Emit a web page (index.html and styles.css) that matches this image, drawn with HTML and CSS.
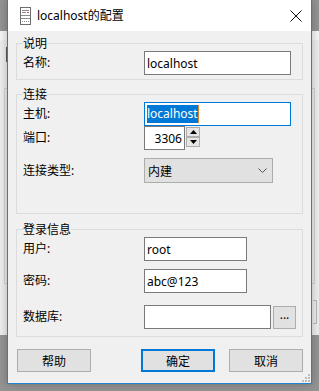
FILE: index.html
```html
<!DOCTYPE html>
<html lang="zh-CN">
<head>
  <meta charset="UTF-8">
  <meta name="viewport" content="width=device-width, initial-scale=1.0">
  <title>localhost的配置</title>
  <link rel="stylesheet" href="styles.css">
</head>
<body>
  <!-- Window behind the dialog -->
  <div class="back-window">
    <div class="back-mark"></div>
    <div class="back-frame"></div>
    <div class="back-box"></div>
  </div>

  <!-- Connection dialog -->
  <div class="dialog">
    <div class="titlebar">
      <svg class="app-icon" width="11" height="18" viewBox="0 0 11 18">
        <rect x="0.5" y="0.5" width="10" height="17" fill="#fff" stroke="#6e6e6e"/>
        <path d="M2 3.5h7M2 5.5h4M1 8.5h9M1 11.5h9" stroke="#8c8c8c"/>
        <path d="M7 5.5h2" stroke="#d05050"/>
        <path d="M2 14.5h1M4 14.5h1M6 14.5h1M8 14.5h1" stroke="#8c8c8c"/>
      </svg>
      <span class="title">localhost的配置</span>
      <svg class="close" width="12" height="12" viewBox="0 0 12 12">
        <path d="M0.5 0.5l11 11M11.5 0.5l-11 11" stroke="#111" stroke-width="1"/>
      </svg>
    </div>

    <div class="content">
      <fieldset class="group group-desc">
        <legend>说明</legend>
        <div class="row">
          <label>名称:</label>
          <div class="field field-wide">localhost</div>
        </div>
      </fieldset>

      <fieldset class="group group-conn">
        <legend>连接</legend>
        <div class="row">
          <label>主机:</label>
          <div class="field field-wide field-focus"><span class="selected">localhost</span><span class="caret"></span></div>
        </div>
        <div class="row row-port">
          <label>端口:</label>
          <div class="field field-port">3306</div>
          <div class="spinner">
            <div class="spin-btn"><svg width="7" height="4" viewBox="0 0 7 4"><path d="M3.5 0L7 4H0z" fill="#000"/></svg></div>
            <div class="spin-btn"><svg width="7" height="4" viewBox="0 0 7 4"><path d="M0 0h7L3.5 4z" fill="#000"/></svg></div>
          </div>
        </div>
        <div class="row row-type">
          <label>连接类型:</label>
          <div class="combo">
            <span>内建</span>
            <svg width="9" height="5" viewBox="0 0 9 5"><path d="M0.5 0.5l4 4 4-4" fill="none" stroke="#555"/></svg>
          </div>
        </div>
      </fieldset>

      <fieldset class="group group-login">
        <legend>登录信息</legend>
        <div class="row">
          <label>用户:</label>
          <div class="field field-short">root</div>
        </div>
        <div class="row row-pass">
          <label>密码:</label>
          <div class="field field-short">abc@123</div>
        </div>
        <div class="row row-db">
          <label>数据库:</label>
          <div class="field field-db"></div>
          <button class="browse">...</button>
        </div>
      </fieldset>

      <div class="actions">
        <button class="btn btn-help">帮助</button>
        <button class="btn btn-ok">确定</button>
        <button class="btn btn-cancel">取消</button>
      </div>
    </div>

    <svg class="grip" width="8" height="8" viewBox="0 0 8 8">
      <path d="M6 0h2v2H6zM3 3h2v2H3zM6 3h2v2H6zM0 6h2v2H0zM3 6h2v2H3zM6 6h2v2H6z" fill="#bdbdbd"/>
    </svg>
  </div>
</body>
</html>
```

FILE: styles.css
```css
* {
  margin: 0;
  padding: 0;
  box-sizing: border-box;
}

body {
  width: 319px;
  height: 391px;
  overflow: hidden;
  position: relative;
  background: #939393;
  font-family: "Noto Sans", "Noto Sans CJK SC", sans-serif;
  font-size: 12px;
  color: #000;
}

/* Window behind */
.back-window {
  position: absolute;
  left: 0;
  top: 31px;
  width: 319px;
  height: 304px;
  background: #ececec;
  border-top: 9px solid #f4f4f4;
}

.back-mark {
  position: absolute;
  left: 6px;
  top: 7px;
  width: 2px;
  height: 15px;
  background: #5c5c5c;
}

.back-frame {
  position: absolute;
  left: 4px;
  right: 4px;
  top: 48px;
  height: 196px;
  border: 1px solid #d2d2d2;
}

.back-box {
  position: absolute;
  right: 2px;
  top: 260px;
  width: 4px;
  height: 24px;
  border: 1px solid #b8b8b8;
  border-left: none;
}

/* Dialog */
.dialog {
  position: absolute;
  left: 7px;
  top: -1px;
  width: 305px;
  height: 385px;
  border: 1px solid #1f82d5;
  background: #f0f0f0;
  box-shadow: 0 0 8px rgba(0, 0, 0, 0.25);
}

.titlebar {
  height: 31px;
  background: #fff;
  display: flex;
  align-items: center;
  padding-left: 12px;
}

.app-icon {
  display: block;
  margin-top: 1px;
}

.title {
  margin-left: 6px;
  line-height: 16px;
}

.close {
  display: block;
  margin-left: auto;
  margin-right: 9px;
  margin-top: 1px;
}

.content {
  padding: 5px 8px 0 8px;
}

/* Group boxes */
.group {
  border: 1px solid #dcdcdc;
  padding: 0 6px 0 6px;
  min-width: 0;
}

.group legend {
  line-height: 15px;
  padding: 0;
}

.group-desc {
  padding-bottom: 4px;
}

.group-conn {
  margin-top: 7px;
  padding-bottom: 30px;
}

.group-login {
  margin-top: 8px;
  padding-bottom: 7px;
}

.row {
  display: flex;
  align-items: center;
}

.row label {
  width: 121px;
  line-height: 16px;
}

.row-port {
  align-items: flex-start;
}

.row-port label {
  margin-top: 4px;
}

.row-type {
  margin-top: 8px;
}

.row-pass {
  margin-top: 8px;
}

.row-db {
  margin-top: 12px;
}

/* Text fields */
.field {
  height: 24px;
  background: #fff;
  border: 1px solid #7a7a7a;
  padding-left: 2px;
  display: flex;
  align-items: center;
  white-space: nowrap;
}

.field-wide {
  width: 147px;
}

.field-focus {
  border-color: #0078d7;
}

.selected {
  background: #0078d7;
  color: #fff;
  line-height: 18px;
}

.caret {
  width: 1px;
  height: 18px;
  background: #e08020;
}

.field-port {
  width: 41px;
  justify-content: flex-end;
  padding-right: 2px;
}

.field-short {
  width: 103px;
}

.field-db {
  width: 127px;
}

/* Spinner */
.spinner {
  margin-left: 1px;
  margin-top: 1px;
  display: flex;
  flex-direction: column;
}

.spin-btn {
  width: 14px;
  height: 10px;
  background: #e5e5e5;
  border: 1px solid #adadad;
  display: flex;
  align-items: center;
  justify-content: center;
}

.spin-btn svg {
  display: block;
}

/* Combo */
.combo {
  width: 129px;
  height: 25px;
  background: #e1e1e1;
  border: 1px solid #adadad;
  display: flex;
  align-items: center;
  justify-content: space-between;
  padding: 0 5px 0 3px;
}

.combo svg {
  display: block;
}

/* Buttons */
button {
  font-family: inherit;
  font-size: 12px;
  color: #000;
  background: #e1e1e1;
  border: 1px solid #adadad;
}

.browse {
  width: 23px;
  height: 23px;
  margin-left: 2px;
  line-height: 10px;
  padding-bottom: 4px;
}

.actions {
  display: flex;
  margin-top: 12px;
}

.btn {
  width: 74px;
  height: 23px;
}

.btn-help {
  margin-left: 1px;
}

.btn-ok {
  margin-left: 50px;
  border: 2px solid #0078d7;
}

.btn-cancel {
  margin-left: 14px;
}

.grip {
  position: absolute;
  right: 1px;
  bottom: 1px;
  display: block;
}
```
